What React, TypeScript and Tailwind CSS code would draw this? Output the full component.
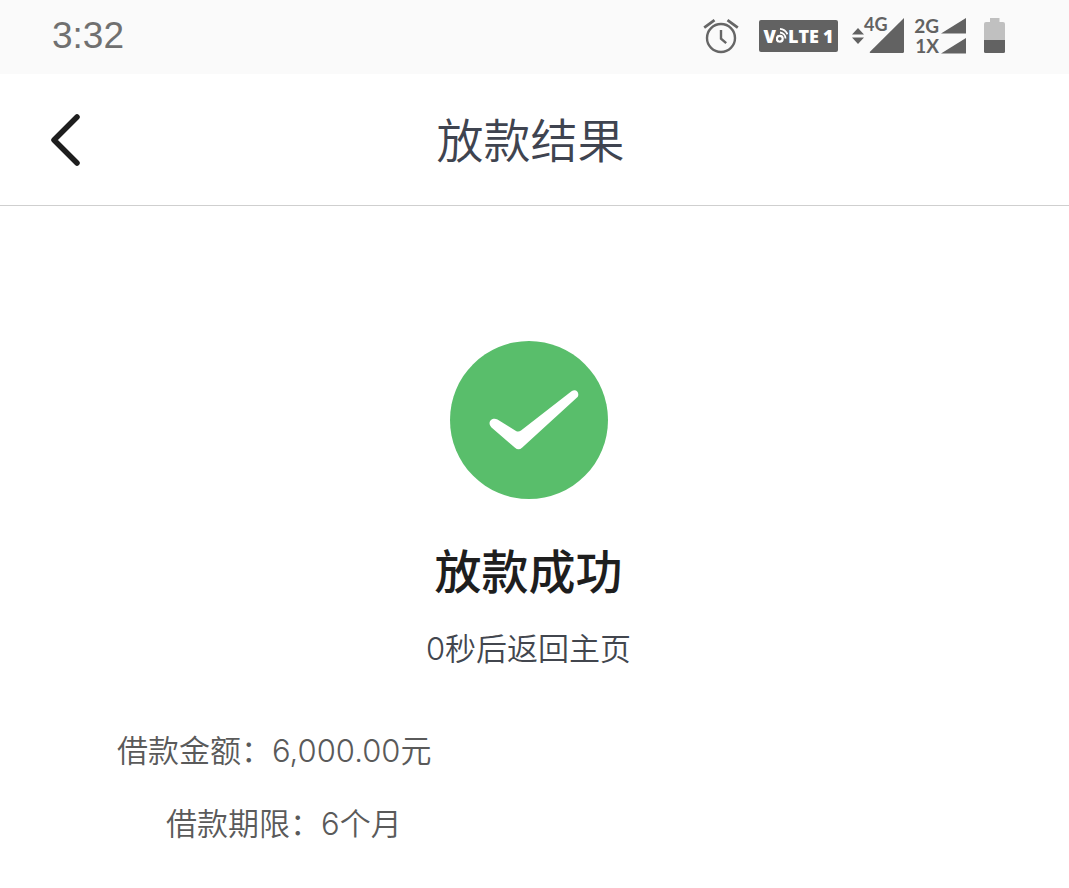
import React from "react";

function AlarmIcon() {
  return (
    <svg className="h-9 w-9" viewBox="0 0 36 36" fill="none" stroke="#666666" strokeWidth="2.4" aria-label="闹钟">
      <circle cx="18" cy="20" r="14" />
      <path d="M18 12v8.6l5.2 4.6" />
      <path d="M1.2 9.6 11.500 2.2M34.8 9.6 24.500 2.2" strokeWidth="2.8" />
    </svg>
  );
}

function VolteBadge() {
  return (
    <span className="flex h-8 w-[79px] items-center justify-center rounded-xs bg-[#626262] text-[18px] leading-8 font-extrabold text-white">
      <span>V</span>
      <svg className="h-6 w-3" viewBox="0 0 12 24" fill="none" stroke="#ffffff" aria-label="o">
        <circle cx="3.800" cy="14.800" r="2.9" strokeWidth="2.2" />
        <path d="M4 8.500a6 6 0 0 1 5.500 6" strokeWidth="1.8" />
        <path d="M4 4.800a9 9 0 0 1 7.500 5.500" strokeWidth="1.8" />
      </svg>
      <span>LTE</span>
      <span className="ml-1">1</span>
    </span>
  );
}

function StatusBar() {
  return (
    <div className="flex h-[74px] items-center bg-[#fafafa] pr-16 pb-0.5 pl-[52px] text-[#626262]">
      <time className="text-[37px] leading-[72px] text-[#707070]">3:32</time>
      <div className="ml-auto flex items-center font-['Open_Sans',sans-serif]">
        <AlarmIcon />
        <span className="ml-5">
          <VolteBadge />
        </span>
        <svg className="ml-3.5 h-4 w-3" viewBox="0 0 12 16" fill="#626262" aria-hidden="true">
          <path d="M6 0l6 6.4H0zM6 16l6-6.4H0z" />
        </svg>
        <div className="relative ml-1 h-9 w-9">
          <svg className="h-9 w-9" viewBox="0 0 36 36" fill="#626262" aria-hidden="true">
            <path d="M36 0v33.500q0 1.500-1.500 1.500H2.500q-1.500 0-.5-1.200z" />
          </svg>
          <span className="absolute -top-1 -left-1 font-['Lato',sans-serif] text-[18px] leading-5 font-bold">4G</span>
        </div>
        <div className="ml-2.5 grid grid-cols-[25px_26px] items-center gap-x-px font-['Lato',sans-serif] text-[19px] leading-5 font-bold">
          <span className="text-right">2G</span>
          <svg className="h-4 w-[26px]" viewBox="0 0 26 16" fill="#626262" aria-hidden="true">
            <path d="M26 0v15.500H1z" />
          </svg>
          <span className="text-right">1X</span>
          <svg className="h-4 w-[26px]" viewBox="0 0 26 16" fill="#626262" aria-hidden="true">
            <path d="M26 0v15.500H1z" />
          </svg>
        </div>
        <svg className="ml-[18px] h-9 w-[21px]" viewBox="0 0 21 36" aria-label="电量">
          <path d="M6 0h9.500v4H19q2 0 2 2V22H0V6q0-2 2-2h4z" fill="#c0c0c0" />
          <path d="M0 22h21V33.500q0 1.500-1.500 1.500h-18Q0 35 0 33.500z" fill="#626262" />
        </svg>
      </div>
    </div>
  );
}

function NavBar() {
  return (
    <header className="grid h-[132px] grid-cols-[96px_1fr_104px] items-center border-b border-[#cfcfcf] bg-white">
      <button type="button" aria-label="返回" className="flex h-24 items-center pl-12">
        <svg className="h-14 w-9" viewBox="0 0 36 56" fill="none" stroke="#1e1e1e" strokeWidth="5.5" strokeLinecap="round" strokeLinejoin="round">
          <path d="M29 5 6 28 29 51" />
        </svg>
      </button>
      <h1 className="pt-1 text-center text-[47px] leading-[68px] font-[350] text-[#3f4450]">放款结果</h1>
    </header>
  );
}

const details = [
  { label: "借款金额", value: "6,000.00元", indent: "pl-[117px]" },
  { label: "借款期限", value: "6个月", indent: "pl-[166px]" },
];

export default function App() {
  return (
    <div className="min-h-screen bg-white font-['Liberation_Sans','Noto_Sans_CJK_SC',sans-serif]">
      <StatusBar />
      <NavBar />
      <main>
        <section className="flex flex-col items-center pt-[135px] pr-3">
          <svg className="h-[158px] w-[158px]" viewBox="0 0 158 158" aria-hidden="true">
            <circle cx="79" cy="79" r="79" fill="#59be6b" />
            <path
              d="M47.500 78.500 66 90Q68.500 91.300 71 89.500L121.500 50.300C126.500 46.800 130.500 53 127 56.600L72 106.800Q68.500 109.800 65 106.800L41.500 86.500C36.500 81.500 42 75.500 47.500 78.500Z"
              fill="#ffffff"
            />
          </svg>
          <h2 className="mt-10 text-[47px] leading-[68px] font-medium text-[#1e1e1e]">放款成功</h2>
          <p className="mt-5 font-['Inter','Noto_Sans_CJK_SC',sans-serif] text-[31px] leading-[44px] font-[350] text-[#42464e]">0秒后返回主页</p>
        </section>
        <dl className="mt-[58px] flex flex-col gap-[29px] font-['Inter','Noto_Sans_CJK_SC',sans-serif] text-[31px] leading-[44px] font-[350] text-[#5a5a5a]">
          {details.map((row) => (
            <div key={row.label} className={`flex ${row.indent}`}>
              <dt>{row.label}：</dt>
              <dd>{row.value}</dd>
            </div>
          ))}
        </dl>
      </main>
    </div>
  );
}
